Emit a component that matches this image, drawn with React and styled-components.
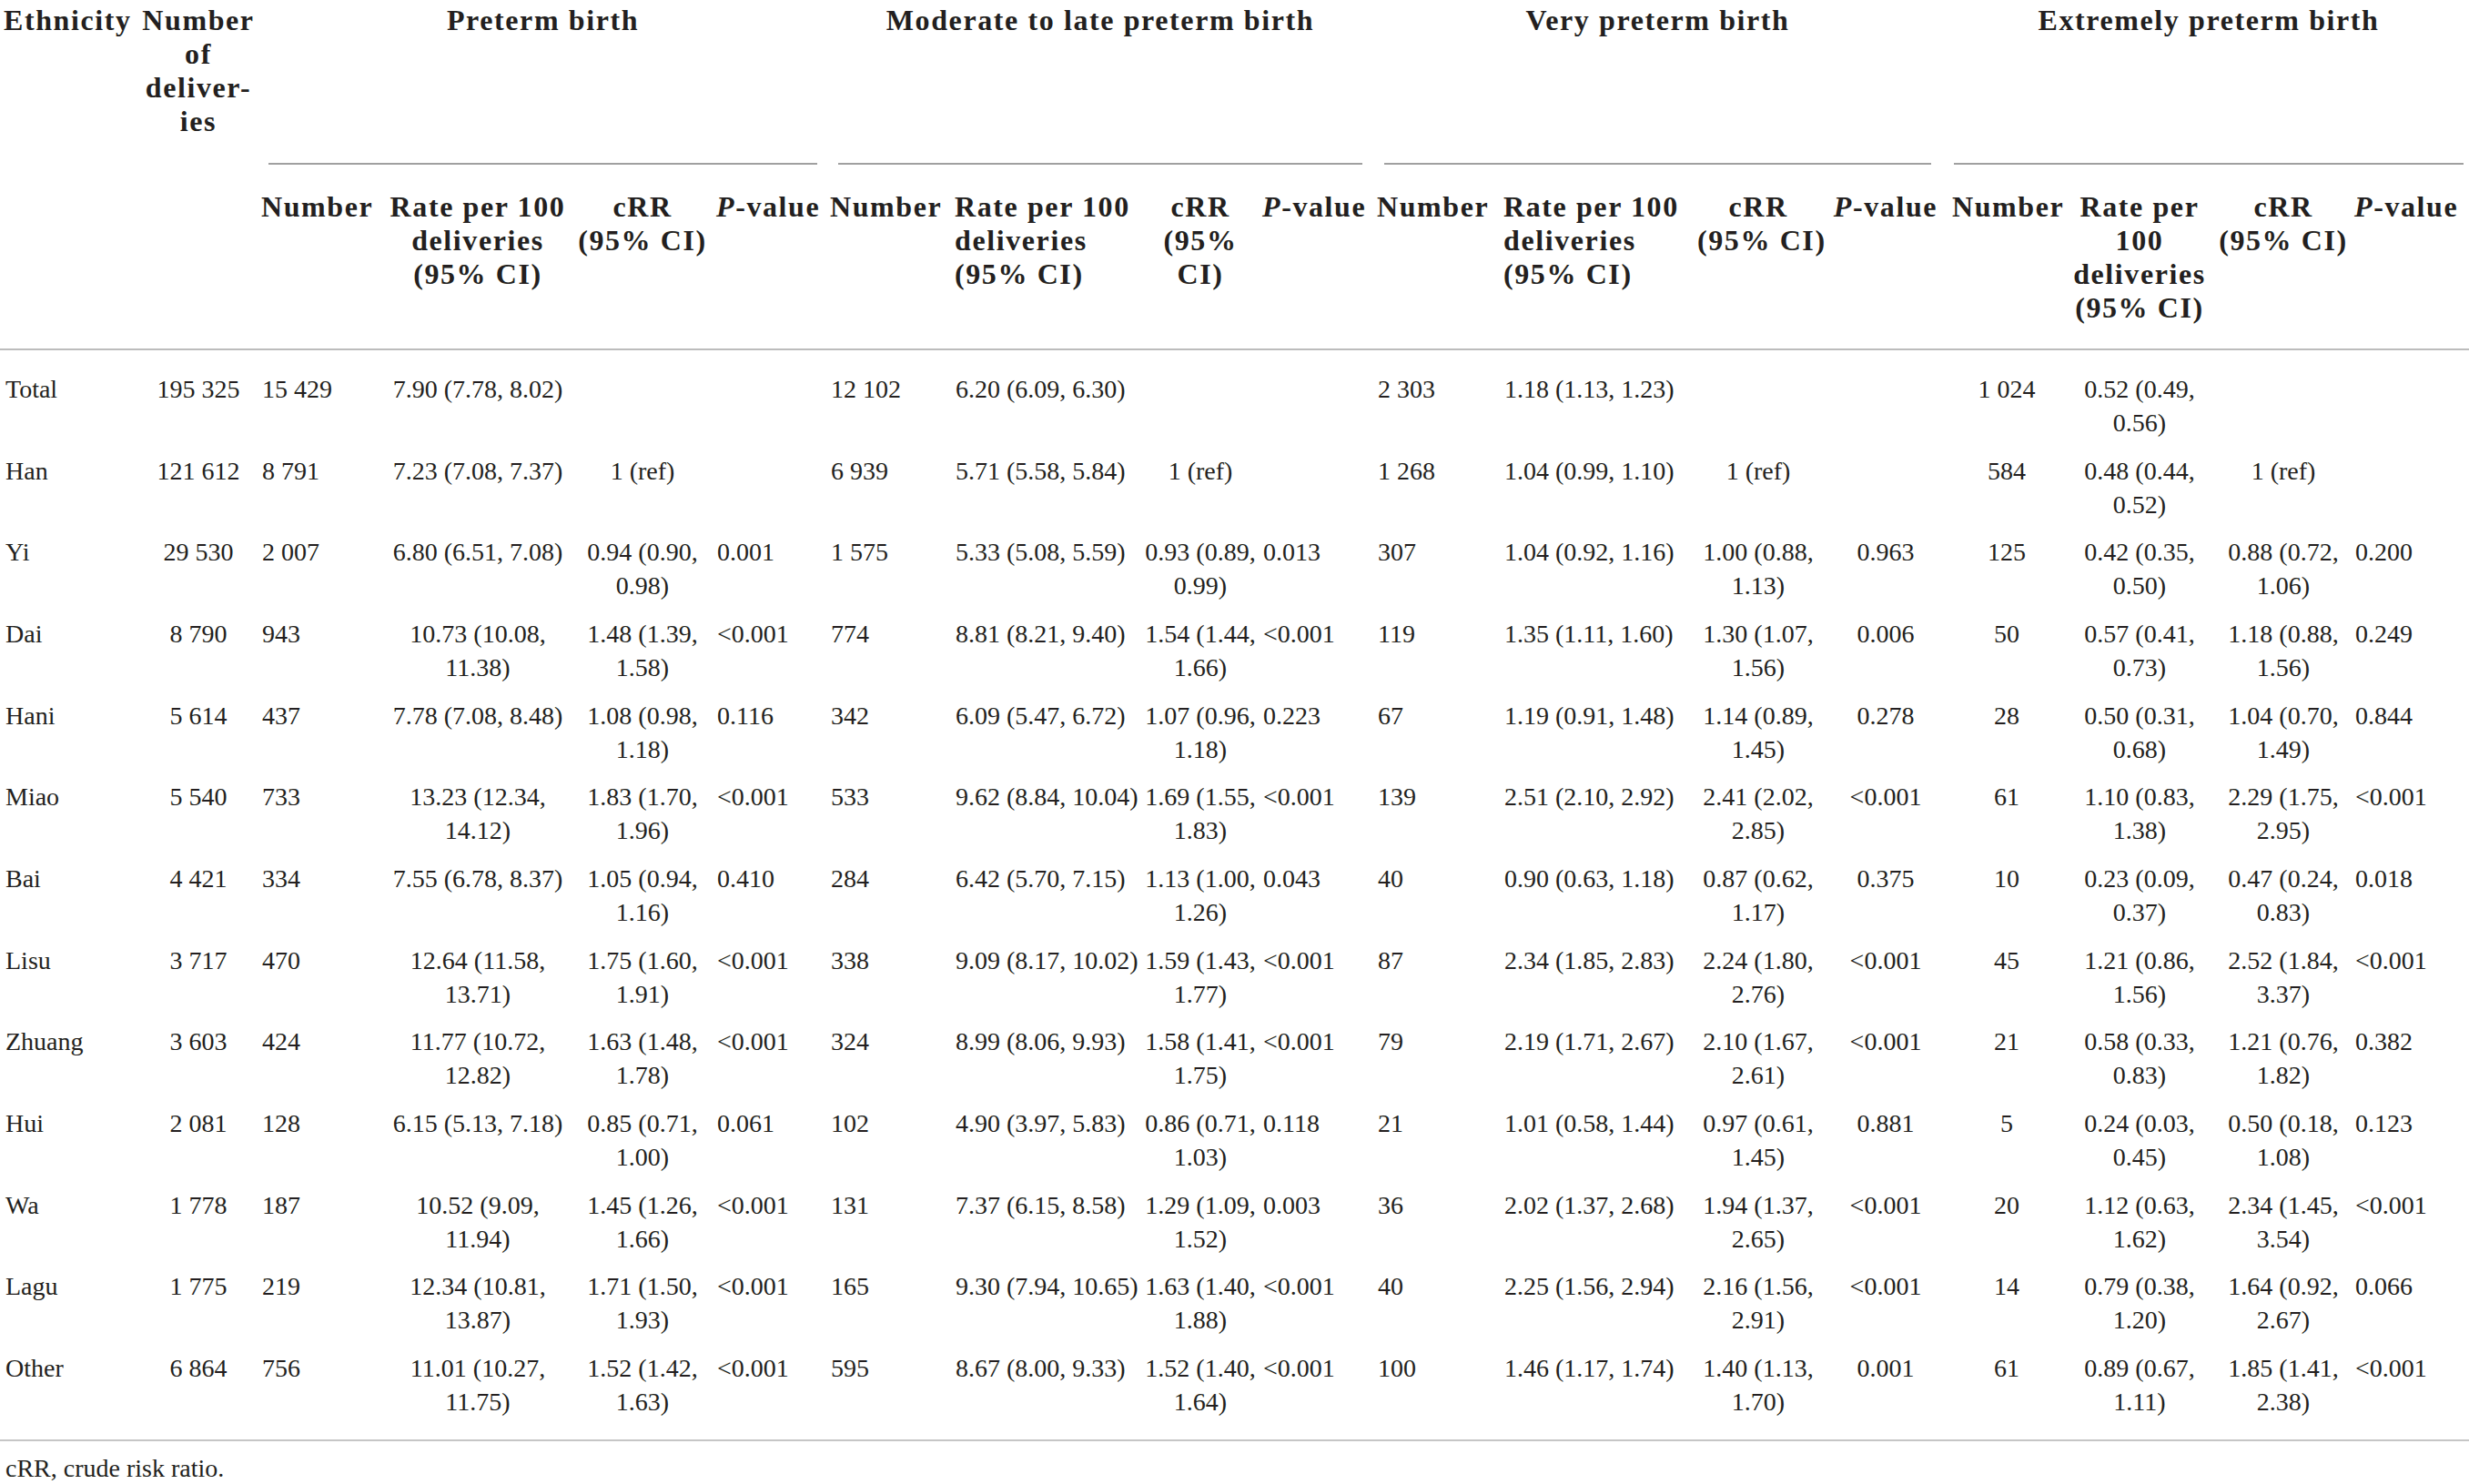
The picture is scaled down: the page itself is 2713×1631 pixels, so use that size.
import React from 'react';
import styled, { createGlobalStyle } from 'styled-components';

const COLS = [152, 132, 138, 206, 156, 125, 137, 208, 130, 126, 139, 213, 140, 140, 126, 166, 150, 129];
const ALIGN = ['left', 'center', 'left', 'center', 'center', 'left', 'left', 'left', 'center', 'left', 'left', 'left', 'center', 'center', 'center', 'center', 'center', 'left'];
const TEMPLATE = COLS.map(w => `${w}px`).join(' ');

const GlobalStyle = createGlobalStyle`
  html, body {
    margin: 0;
    padding: 0;
    background: #fff;
  }
  body {
    font-family: "Liberation Serif", "Times New Roman", serif;
    color: #231f20;
  }
`;

const Page = styled.div`
  width: 2713px;
  height: 1631px;
  overflow: hidden;
  background: #fff;
`;

const Head = styled.div`
  display: grid;
  grid-template-columns: ${TEMPLATE};
  grid-template-rows: 177px auto;
  padding-top: 4px;
  border-bottom: 2px solid #bcbcbc;
  font-weight: bold;
  font-size: 32px;
  line-height: 37px;
  letter-spacing: 1.6px;
`;

const SpanCell = styled.div`
  grid-row: 1 / 3;
  grid-column: ${p => p.col};
  text-align: ${p => p.align};
  white-space: pre;
  padding: ${p => (p.col === 1 ? '0 0 0 4px' : '0 2px')};
`;

const Group = styled.div`
  grid-row: 1;
  grid-column: ${p => p.from} / span 4;
  display: flex;
  flex-direction: column;
  justify-content: space-between;
  margin: 0 ${p => p.right}px 0 ${p => p.left}px;
`;

const GroupTitle = styled.div`
  text-align: center;
  white-space: nowrap;
`;

const GroupRule = styled.div`
  border-top: 2px solid #a0a0a0;
`;

const SubHead = styled.div`
  grid-row: 2;
  text-align: ${p => p.align};
  white-space: pre;
  padding: 28px 3px 26px;
`;

const Body = styled.div`
  padding: 16px 0 15px;
  border-bottom: 2px solid #c6c6c6;
`;

const Row = styled.div`
  display: grid;
  grid-template-columns: ${TEMPLATE};
  font-size: 28px;
  line-height: 37px;
`;

const Cell = styled.div`
  text-align: ${p => p.align};
  white-space: pre;
  padding: 8px 4px 7.67px ${p => (p.first ? '6px' : '4px')};
`;

const Note = styled.div`
  padding: 11px 0 0 6px;
  font-size: 28px;
  line-height: 37px;
`;

const PValue = () => (
  <>
    <i>P</i>-value
  </>
);

const groups = [
  { title: 'Preterm birth', from: 3, left: 11, right: 11, cRR: 'cRR\n(95% CI)', rate: 'Rate per 100\ndeliveries\n(95% CI)' },
  { title: 'Moderate to late preterm birth', from: 7, left: 12, right: 13, cRR: 'cRR\n(95%\nCI)', rate: 'Rate per 100\ndeliveries\n(95% CI)' },
  { title: 'Very preterm birth', from: 11, left: 11, right: 20, cRR: 'cRR\n(95% CI)', rate: 'Rate per 100\ndeliveries\n(95% CI)' },
  { title: 'Extremely preterm birth', from: 15, left: 5, right: 6, cRR: 'cRR\n(95% CI)', rate: 'Rate per\n100\ndeliveries\n(95% CI)' },
];

const rows = [
  ['Total', '195 325', '15 429', '7.90 (7.78, 8.02)', '', '', '12 102', '6.20 (6.09, 6.30)', '', '', '2 303', '1.18 (1.13, 1.23)', '', '', '1 024', '0.52 (0.49,\n0.56)', '', ''],
  ['Han', '121 612', '8 791', '7.23 (7.08, 7.37)', '1 (ref)', '', '6 939', '5.71 (5.58, 5.84)', '1 (ref)', '', '1 268', '1.04 (0.99, 1.10)', '1 (ref)', '', '584', '0.48 (0.44,\n0.52)', '1 (ref)', ''],
  ['Yi', '29 530', '2 007', '6.80 (6.51, 7.08)', '0.94 (0.90,\n0.98)', '0.001', '1 575', '5.33 (5.08, 5.59)', '0.93 (0.89,\n0.99)', '0.013', '307', '1.04 (0.92, 1.16)', '1.00 (0.88,\n1.13)', '0.963', '125', '0.42 (0.35,\n0.50)', '0.88 (0.72,\n1.06)', '0.200'],
  ['Dai', '8 790', '943', '10.73 (10.08,\n11.38)', '1.48 (1.39,\n1.58)', '<0.001', '774', '8.81 (8.21, 9.40)', '1.54 (1.44,\n1.66)', '<0.001', '119', '1.35 (1.11, 1.60)', '1.30 (1.07,\n1.56)', '0.006', '50', '0.57 (0.41,\n0.73)', '1.18 (0.88,\n1.56)', '0.249'],
  ['Hani', '5 614', '437', '7.78 (7.08, 8.48)', '1.08 (0.98,\n1.18)', '0.116', '342', '6.09 (5.47, 6.72)', '1.07 (0.96,\n1.18)', '0.223', '67', '1.19 (0.91, 1.48)', '1.14 (0.89,\n1.45)', '0.278', '28', '0.50 (0.31,\n0.68)', '1.04 (0.70,\n1.49)', '0.844'],
  ['Miao', '5 540', '733', '13.23 (12.34,\n14.12)', '1.83 (1.70,\n1.96)', '<0.001', '533', '9.62 (8.84, 10.04)', '1.69 (1.55,\n1.83)', '<0.001', '139', '2.51 (2.10, 2.92)', '2.41 (2.02,\n2.85)', '<0.001', '61', '1.10 (0.83,\n1.38)', '2.29 (1.75,\n2.95)', '<0.001'],
  ['Bai', '4 421', '334', '7.55 (6.78, 8.37)', '1.05 (0.94,\n1.16)', '0.410', '284', '6.42 (5.70, 7.15)', '1.13 (1.00,\n1.26)', '0.043', '40', '0.90 (0.63, 1.18)', '0.87 (0.62,\n1.17)', '0.375', '10', '0.23 (0.09,\n0.37)', '0.47 (0.24,\n0.83)', '0.018'],
  ['Lisu', '3 717', '470', '12.64 (11.58,\n13.71)', '1.75 (1.60,\n1.91)', '<0.001', '338', '9.09 (8.17, 10.02)', '1.59 (1.43,\n1.77)', '<0.001', '87', '2.34 (1.85, 2.83)', '2.24 (1.80,\n2.76)', '<0.001', '45', '1.21 (0.86,\n1.56)', '2.52 (1.84,\n3.37)', '<0.001'],
  ['Zhuang', '3 603', '424', '11.77 (10.72,\n12.82)', '1.63 (1.48,\n1.78)', '<0.001', '324', '8.99 (8.06, 9.93)', '1.58 (1.41,\n1.75)', '<0.001', '79', '2.19 (1.71, 2.67)', '2.10 (1.67,\n2.61)', '<0.001', '21', '0.58 (0.33,\n0.83)', '1.21 (0.76,\n1.82)', '0.382'],
  ['Hui', '2 081', '128', '6.15 (5.13, 7.18)', '0.85 (0.71,\n1.00)', '0.061', '102', '4.90 (3.97, 5.83)', '0.86 (0.71,\n1.03)', '0.118', '21', '1.01 (0.58, 1.44)', '0.97 (0.61,\n1.45)', '0.881', '5', '0.24 (0.03,\n0.45)', '0.50 (0.18,\n1.08)', '0.123'],
  ['Wa', '1 778', '187', '10.52 (9.09,\n11.94)', '1.45 (1.26,\n1.66)', '<0.001', '131', '7.37 (6.15, 8.58)', '1.29 (1.09,\n1.52)', '0.003', '36', '2.02 (1.37, 2.68)', '1.94 (1.37,\n2.65)', '<0.001', '20', '1.12 (0.63,\n1.62)', '2.34 (1.45,\n3.54)', '<0.001'],
  ['Lagu', '1 775', '219', '12.34 (10.81,\n13.87)', '1.71 (1.50,\n1.93)', '<0.001', '165', '9.30 (7.94, 10.65)', '1.63 (1.40,\n1.88)', '<0.001', '40', '2.25 (1.56, 2.94)', '2.16 (1.56,\n2.91)', '<0.001', '14', '0.79 (0.38,\n1.20)', '1.64 (0.92,\n2.67)', '0.066'],
  ['Other', '6 864', '756', '11.01 (10.27,\n11.75)', '1.52 (1.42,\n1.63)', '<0.001', '595', '8.67 (8.00, 9.33)', '1.52 (1.40,\n1.64)', '<0.001', '100', '1.46 (1.17, 1.74)', '1.40 (1.13,\n1.70)', '0.001', '61', '0.89 (0.67,\n1.11)', '1.85 (1.41,\n2.38)', '<0.001'],
];

const App = () => (
  <Page>
    <GlobalStyle />
    <Head>
      <SpanCell col={1} align="left">Ethnicity</SpanCell>
      <SpanCell col={2} align="center">{'Number\nof\ndeliver-\nies'}</SpanCell>
      {groups.map(g => (
        <Group key={g.title} from={g.from} left={g.left} right={g.right}>
          <GroupTitle>{g.title}</GroupTitle>
          <GroupRule />
        </Group>
      ))}
      {groups.flatMap(g => {
        const c = g.from - 1;
        return [
          <SubHead key={`${g.title}-n`} align={ALIGN[c]}>Number</SubHead>,
          <SubHead key={`${g.title}-r`} align={ALIGN[c + 1]}>{g.rate}</SubHead>,
          <SubHead key={`${g.title}-c`} align={ALIGN[c + 2]}>{g.cRR}</SubHead>,
          <SubHead key={`${g.title}-p`} align={ALIGN[c + 3]}><PValue /></SubHead>,
        ];
      })}
    </Head>
    <Body>
      {rows.map(r => (
        <Row key={r[0]}>
          {r.map((v, i) => (
            <Cell key={i} align={ALIGN[i]} first={i === 0}>{v}</Cell>
          ))}
        </Row>
      ))}
    </Body>
    <Note>cRR, crude risk ratio.</Note>
  </Page>
);

export default App;
